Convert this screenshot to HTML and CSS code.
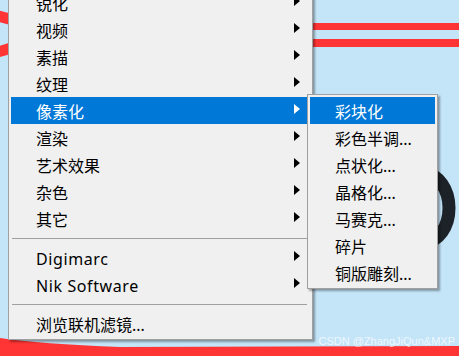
FILE: index.html
```html
<!DOCTYPE html>
<html lang="zh-CN">
<head>
    <meta charset="UTF-8">
    <title>滤镜菜单</title>
    <link rel="stylesheet" href="styles.css">
</head>
<body>

    <!-- 背景画布 -->
    <svg class="backdrop" width="459" height="356" viewBox="0 0 459 356">
        <rect width="459" height="356" fill="#c4e4f8"/>
        <path d="M-6 15 Q 6 18 20 22" stroke="#ff3434" stroke-width="11" fill="none"/>
        <path d="M-6 53 Q 6 50 20 45" stroke="#ff3434" stroke-width="11" fill="none"/>
        <line x1="300" y1="26.5" x2="459" y2="26.5" stroke="#ff3434" stroke-width="7"/>
        <line x1="300" y1="43" x2="459" y2="43" stroke="#ff3434" stroke-width="8"/>
        <ellipse cx="425" cy="208" rx="24" ry="34" stroke="#1c2228" stroke-width="13" fill="none"/>
        <path d="M0 338 Q 40 344 120 347 L459 346 L459 356 L0 356 Z" fill="#ff3434"/>
    </svg>

    <!-- 主菜单 -->
    <div class="menu main-menu">
        <div class="item">锐化<span class="arrow"></span></div>
        <div class="item">视频<span class="arrow"></span></div>
        <div class="item">素描<span class="arrow"></span></div>
        <div class="item">纹理<span class="arrow"></span></div>
        <div class="item active">像素化<span class="arrow"></span></div>
        <div class="item">渲染<span class="arrow"></span></div>
        <div class="item">艺术效果<span class="arrow"></span></div>
        <div class="item">杂色<span class="arrow"></span></div>
        <div class="item">其它<span class="arrow"></span></div>
        <div class="sep"></div>
        <div class="item latin">Digimarc<span class="arrow"></span></div>
        <div class="item latin">Nik Software<span class="arrow"></span></div>
        <div class="sep"></div>
        <div class="item">浏览联机滤镜...</div>
    </div>

    <!-- 子菜单：像素化 -->
    <div class="menu sub-menu">
        <div class="item active">彩块化</div>
        <div class="item">彩色半调...</div>
        <div class="item">点状化...</div>
        <div class="item">晶格化...</div>
        <div class="item">马赛克...</div>
        <div class="item">碎片</div>
        <div class="item">铜版雕刻...</div>
    </div>

    <div class="watermark">CSDN @ZhangJiQun&amp;MXP</div>

</body>
</html>
```

FILE: styles.css
```css
body {
    margin: 0;
    padding: 0;
    width: 459px;
    height: 356px;
    overflow: hidden;
    position: relative;
    background-color: #c4e4f8;
    font-family: "Noto Sans", "Noto Sans CJK SC", sans-serif;
    font-size: 16px;
    color: #000;
}

.backdrop {
    position: absolute;
    left: 0;
    top: 0;
    display: block;
}

/* 弹出菜单 */
.menu {
    position: absolute;
    box-sizing: border-box;
    background-color: #f0f0f0;
    border: 1px solid #a0a0a0;
    box-shadow: 2px 2px 2px rgba(0, 0, 0, 0.35);
    display: flex;
    flex-direction: column;
}

.main-menu {
    left: 8px;
    top: -14px;
    width: 305px;
    padding: 2px 5px 2px 2px;
}

.sub-menu {
    left: 307px;
    top: 94px;
    width: 131px;
    padding: 2px;
}

.item {
    height: 27px;
    box-sizing: border-box;
    display: flex;
    align-items: center;
    justify-content: space-between;
    padding: 2px 7px 0 25px;
    white-space: nowrap;
    line-height: 1;
}

.item.latin {
    letter-spacing: 0.6px;
}

.item.active {
    background-color: #0078d7;
    color: #fff;
}

/* 右侧小三角 */
.arrow {
    width: 0;
    height: 0;
    border-top: 5px solid transparent;
    border-bottom: 5px solid transparent;
    border-left: 6px solid #000;
    margin-bottom: 5px;
}

.item.active .arrow {
    border-left-color: #fff;
}

.sep {
    height: 12px;
    display: flex;
    flex-direction: column;
}

.sep::before {
    content: "";
    height: 1px;
    margin: 6px 0 0 1px;
    background-color: #a0a0a0;
}

.watermark {
    position: absolute;
    right: 4px;
    bottom: 9px;
    font-family: "Liberation Sans", sans-serif;
    font-size: 11px;
    color: rgba(255, 255, 255, 0.75);
}
```
